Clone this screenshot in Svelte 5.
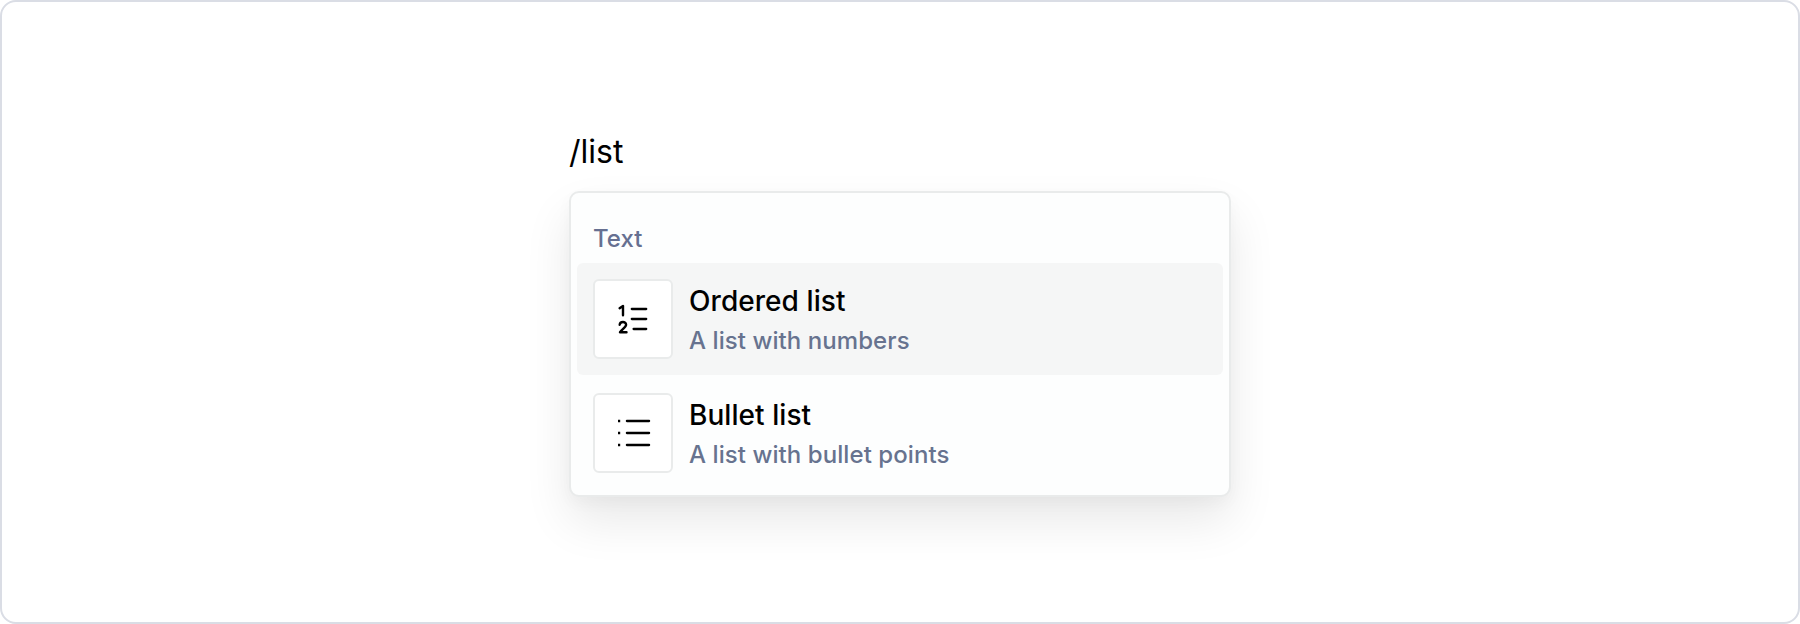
<script>
  let query = "/list";
  let selected = 0;

  const items = [
    { icon: "ordered", title: "Ordered list", description: "A list with numbers" },
    { icon: "bullet", title: "Bullet list", description: "A list with bullet points" },
  ];
</script>

<div class="frame">
  <div class="editor">
    <p class="query">{query}</p>
    <div class="menu">
      <div class="group">Text</div>
      {#each items as item, index (item.icon)}
        <button class="item" class:selected={index === selected} on:click={() => (selected = index)}>
          <span class="icon">
            {#if item.icon === "ordered"}
              <svg width="48" height="48" viewBox="0 0 48 48">
                <path d="M22.8 14H37.2M22.8 24H37.2M24.6 34H37.2" />
                <path class="digit" d="M10.6 13.2L14 10.9V20.2" />
                <path class="digit" d="M10.7 29.8C10.9 26.2 17.1 26.1 17.1 29.8C17.1 32.2 13 34.2 11 37.2H17.5" />
              </svg>
            {:else}
              <svg width="48" height="48" viewBox="0 0 48 48">
                <path d="M17.9 12H40.1M17.9 24H40.1M17.9 36H40.1" />
                <path class="dots" d="M9 12h2.2M9 24h2.2M9 36h2.2" />
              </svg>
            {/if}
          </span>
          <span class="label">
            <span class="title">{item.title}</span>
            <span class="description">{item.description}</span>
          </span>
        </button>
      {/each}
    </div>
  </div>
</div>

<style>
  .frame {
    box-sizing: border-box;
    width: 1800px;
    height: 624px;
    border: 2px solid #dadde5;
    border-radius: 16px;
    background: #fff;
    font-family: Inter, "Liberation Sans", sans-serif;
  }

  .editor {
    width: 662px;
    margin: 0 auto;
    padding-top: 130px;
  }

  .query {
    margin: 0 0 19px;
    font-size: 32px;
    line-height: 40px;
    color: #000;
  }

  .menu {
    box-sizing: border-box;
    height: 306px;
    padding: 6px;
    border: 2px solid #e9ebeb;
    border-radius: 10px;
    background: #fdfefe;
    box-shadow:
      0 24px 48px rgba(0, 0, 0, 0.09),
      0 6px 16px rgba(0, 0, 0, 0.03);
  }

  .group {
    height: 64px;
    padding: 24px 16px 0;
    box-sizing: border-box;
    font-size: 24px;
    font-weight: 500;
    line-height: 32px;
    color: #667091;
  }

  .item {
    display: flex;
    align-items: center;
    gap: 16px;
    box-sizing: border-box;
    width: 100%;
    height: 112px;
    margin: 0 0 2px;
    padding: 16px;
    border: 0;
    border-radius: 6px;
    background: none;
    font-family: inherit;
    text-align: left;
  }

  .selected {
    background: #f5f6f6;
  }

  .icon {
    display: flex;
    align-items: center;
    justify-content: center;
    box-sizing: border-box;
    width: 80px;
    height: 80px;
    border: 2px solid #e9ebeb;
    border-radius: 6px;
    background: #fff;
  }

  svg {
    fill: none;
    stroke: #000;
    stroke-width: 2.3;
    stroke-linecap: round;
    stroke-linejoin: round;
  }

  .digit {
    stroke-width: 2.4;
  }

  .dots {
    stroke-linecap: butt;
  }

  .label {
    display: flex;
    flex-direction: column;
    gap: 4px;
  }

  .title {
    font-size: 28px;
    font-weight: 500;
    line-height: 40px;
    letter-spacing: 0.06px;
    color: #000;
  }

  .description {
    font-size: 24px;
    font-weight: 500;
    line-height: 32px;
    letter-spacing: 0.07px;
    color: #67738f;
  }
</style>
